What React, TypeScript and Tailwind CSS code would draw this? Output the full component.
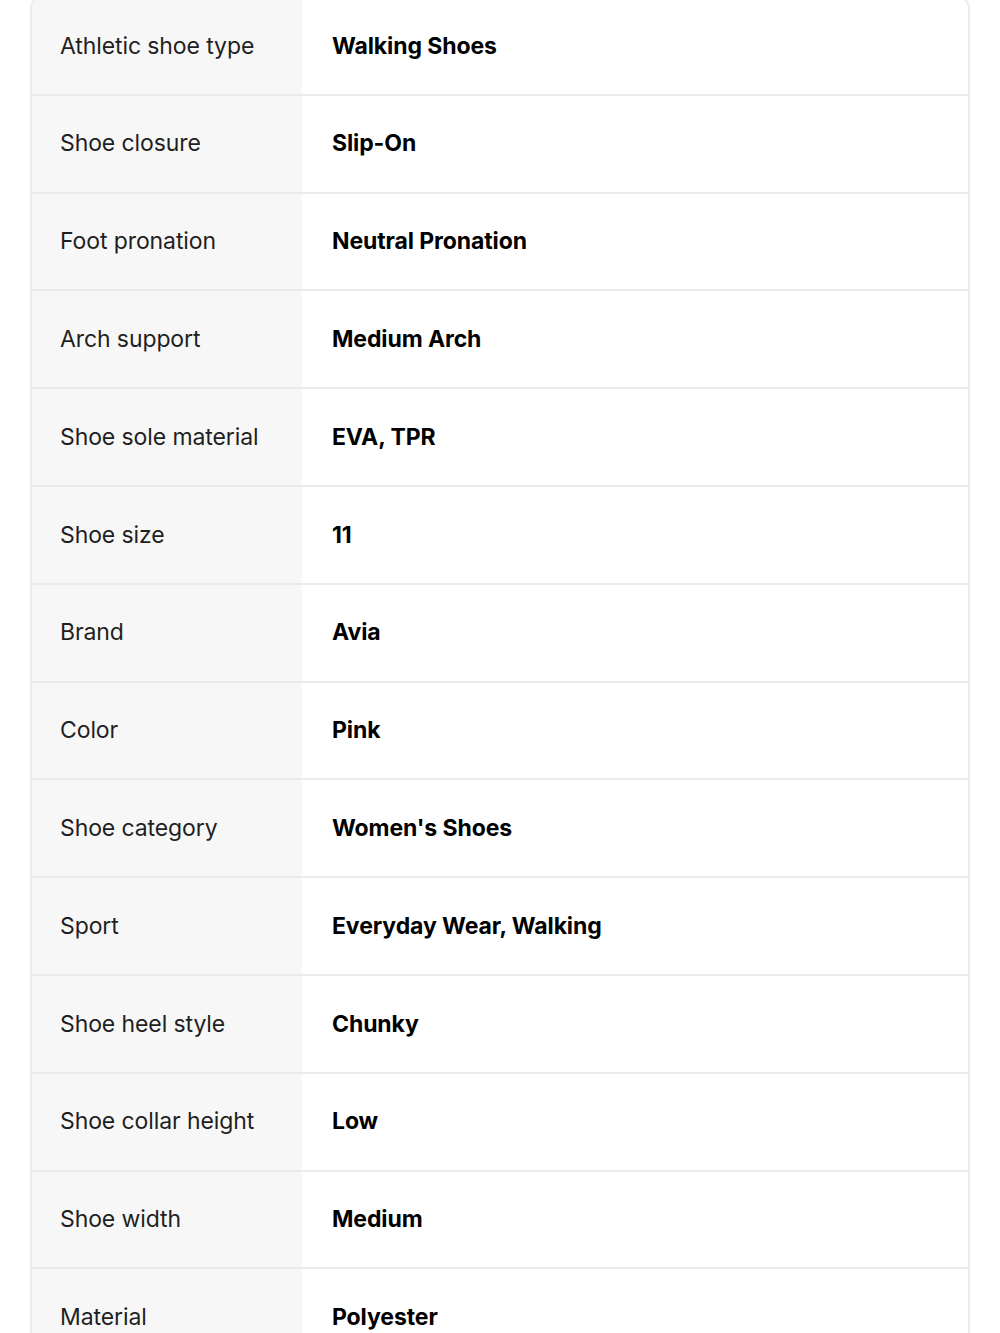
const rows: [string, string][] = [
  ["Athletic shoe type", "Walking Shoes"],
  ["Shoe closure", "Slip-On"],
  ["Foot pronation", "Neutral Pronation"],
  ["Arch support", "Medium Arch"],
  ["Shoe sole material", "EVA, TPR"],
  ["Shoe size", "11"],
  ["Brand", "Avia"],
  ["Color", "Pink"],
  ["Shoe category", "Women's Shoes"],
  ["Sport", "Everyday Wear, Walking"],
  ["Shoe heel style", "Chunky"],
  ["Shoe collar height", "Low"],
  ["Shoe width", "Medium"],
  ["Material", "Polyester"],
];

export default function App() {
  return (
    <div className="h-[1333px] overflow-hidden bg-white font-['Inter',sans-serif]">
      <div className="mx-[30px] -mt-[4px] overflow-hidden rounded-[12px] border-2 border-[#ebebeb]">
        {rows.map(([label, value]) => (
          <div key={label} className="flex h-[97.8px] border-b-2 border-[#ebebeb]">
            <div className="flex w-[270px] shrink-0 items-center bg-[#f7f7f7] pl-[28px] text-[23px] tracking-[-0.1px] text-[#1f1f1f]">
              {label}
            </div>
            <div className="flex flex-1 items-center pl-[30px] text-[23px] font-bold tracking-[-0.1px] text-black">
              {value}
            </div>
          </div>
        ))}
      </div>
    </div>
  );
}
